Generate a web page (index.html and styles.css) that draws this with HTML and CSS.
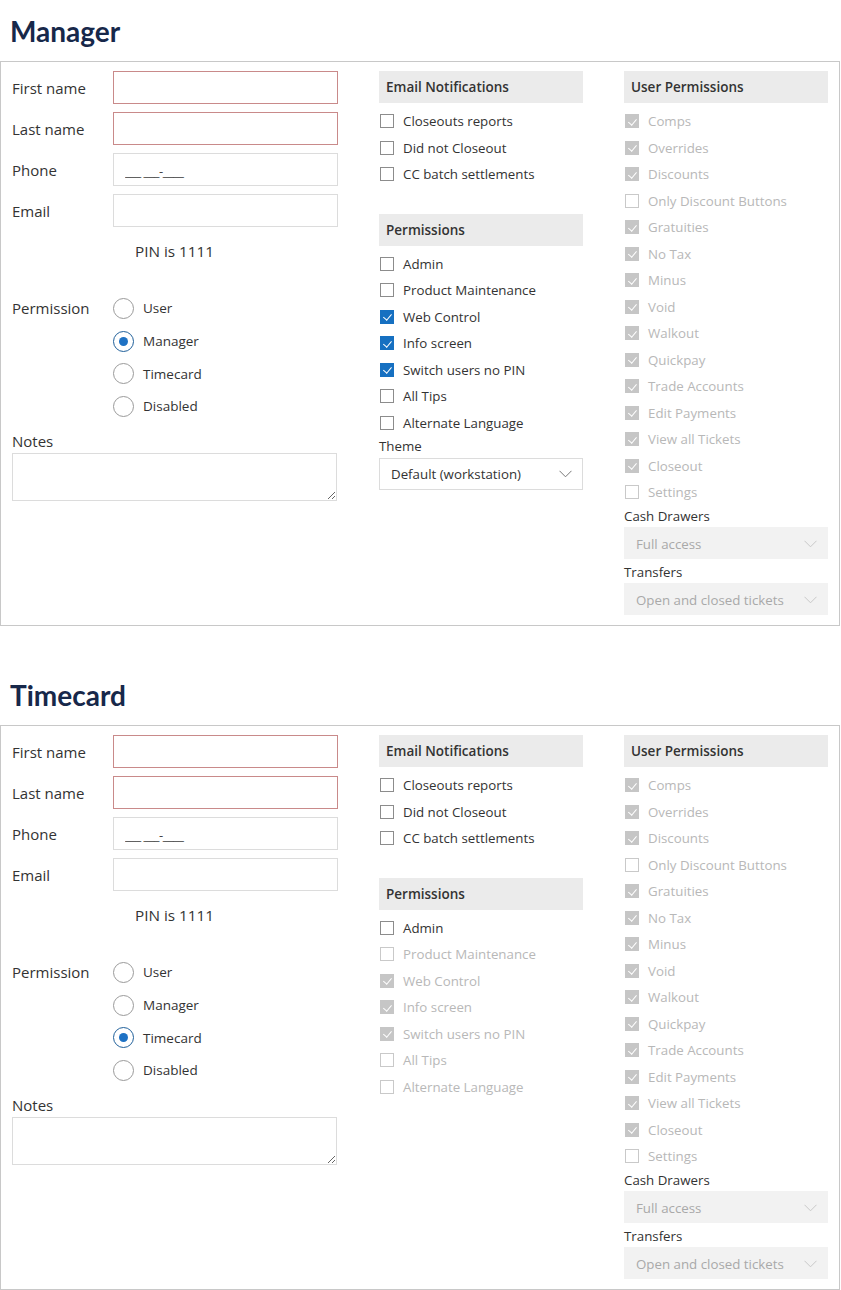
FILE: index.html
```html
<!DOCTYPE html>
<html>
<head>
<meta charset="utf-8">
<title>Users</title>
<link rel="stylesheet" href="styles.css">
</head>
<body>

<section class="sec">
  <h2 class="title">Manager</h2>
  <div class="box">
    <div class="col-left">
      <div class="frow"><label class="flabel">First name</label><input class="input invalid" type="text"></div>
      <div class="frow"><label class="flabel">Last name</label><input class="input invalid" type="text"></div>
      <div class="frow"><label class="flabel">Phone</label><input class="input" type="text" placeholder="___ ___-____"></div>
      <div class="frow"><label class="flabel">Email</label><input class="input" type="text"></div>
      <div class="pin">PIN is 1111</div>
      <div class="perm">
        <div class="flabel plabel">Permission</div>
        <div class="radios">
          <div class="radio"><span class="rc"></span>User</div>
          <div class="radio"><span class="rc on"></span>Manager</div>
          <div class="radio"><span class="rc"></span>Timecard</div>
          <div class="radio"><span class="rc"></span>Disabled</div>
        </div>
      </div>
      <div class="notes-label">Notes</div>
      <textarea class="textarea"></textarea>
    </div>

    <div class="col">
      <div class="ghead">Email Notifications</div>
      <div class="checks">
        <div class="chk"><span class="cb"></span>Closeouts reports</div>
        <div class="chk"><span class="cb"></span>Did not Closeout</div>
        <div class="chk"><span class="cb"></span>CC batch settlements</div>
      </div>
      <div class="ghead gap">Permissions</div>
      <div class="checks">
        <div class="chk"><span class="cb"></span>Admin</div>
        <div class="chk"><span class="cb"></span>Product Maintenance</div>
        <div class="chk"><span class="cb on"></span>Web Control</div>
        <div class="chk"><span class="cb on"></span>Info screen</div>
        <div class="chk"><span class="cb on"></span>Switch users no PIN</div>
        <div class="chk"><span class="cb"></span>All Tips</div>
        <div class="chk"><span class="cb"></span>Alternate Language</div>
      </div>
      <div class="slabel">Theme</div>
      <div class="select"><span>Default (workstation)</span><svg class="chev" width="13" height="8" viewBox="0 0 13 8"><path d="M0.5 0.8 L6.5 6.8 L12.5 0.8" stroke="#777" stroke-width="1" fill="none"/></svg></div>
    </div>

    <div class="col">
      <div class="ghead">User Permissions</div>
      <div class="checks dis">
        <div class="chk"><span class="cb on"></span>Comps</div>
        <div class="chk"><span class="cb on"></span>Overrides</div>
        <div class="chk"><span class="cb on"></span>Discounts</div>
        <div class="chk"><span class="cb"></span>Only Discount Buttons</div>
        <div class="chk"><span class="cb on"></span>Gratuities</div>
        <div class="chk"><span class="cb on"></span>No Tax</div>
        <div class="chk"><span class="cb on"></span>Minus</div>
        <div class="chk"><span class="cb on"></span>Void</div>
        <div class="chk"><span class="cb on"></span>Walkout</div>
        <div class="chk"><span class="cb on"></span>Quickpay</div>
        <div class="chk"><span class="cb on"></span>Trade Accounts</div>
        <div class="chk"><span class="cb on"></span>Edit Payments</div>
        <div class="chk"><span class="cb on"></span>View all Tickets</div>
        <div class="chk"><span class="cb on"></span>Closeout</div>
        <div class="chk"><span class="cb"></span>Settings</div>
      </div>
      <div class="slabel">Cash Drawers</div>
      <div class="select dis"><span>Full access</span><svg class="chev" width="13" height="8" viewBox="0 0 13 8"><path d="M0.5 0.8 L6.5 6.8 L12.5 0.8" stroke="#c8c8c8" stroke-width="1" fill="none"/></svg></div>
      <div class="slabel s2">Transfers</div>
      <div class="select dis"><span>Open and closed tickets</span><svg class="chev" width="13" height="8" viewBox="0 0 13 8"><path d="M0.5 0.8 L6.5 6.8 L12.5 0.8" stroke="#c8c8c8" stroke-width="1" fill="none"/></svg></div>
    </div>
  </div>
</section>

<section class="sec">
  <h2 class="title">Timecard</h2>
  <div class="box">
    <div class="col-left">
      <div class="frow"><label class="flabel">First name</label><input class="input invalid" type="text"></div>
      <div class="frow"><label class="flabel">Last name</label><input class="input invalid" type="text"></div>
      <div class="frow"><label class="flabel">Phone</label><input class="input" type="text" placeholder="___ ___-____"></div>
      <div class="frow"><label class="flabel">Email</label><input class="input" type="text"></div>
      <div class="pin">PIN is 1111</div>
      <div class="perm">
        <div class="flabel plabel">Permission</div>
        <div class="radios">
          <div class="radio"><span class="rc"></span>User</div>
          <div class="radio"><span class="rc"></span>Manager</div>
          <div class="radio"><span class="rc on"></span>Timecard</div>
          <div class="radio"><span class="rc"></span>Disabled</div>
        </div>
      </div>
      <div class="notes-label">Notes</div>
      <textarea class="textarea"></textarea>
    </div>

    <div class="col">
      <div class="ghead">Email Notifications</div>
      <div class="checks">
        <div class="chk"><span class="cb"></span>Closeouts reports</div>
        <div class="chk"><span class="cb"></span>Did not Closeout</div>
        <div class="chk"><span class="cb"></span>CC batch settlements</div>
      </div>
      <div class="ghead gap">Permissions</div>
      <div class="checks">
        <div class="chk"><span class="cb"></span>Admin</div>
        <div class="chk dis"><span class="cb"></span>Product Maintenance</div>
        <div class="chk dis"><span class="cb on"></span>Web Control</div>
        <div class="chk dis"><span class="cb on"></span>Info screen</div>
        <div class="chk dis"><span class="cb on"></span>Switch users no PIN</div>
        <div class="chk dis"><span class="cb"></span>All Tips</div>
        <div class="chk dis"><span class="cb"></span>Alternate Language</div>
      </div>
    </div>

    <div class="col">
      <div class="ghead">User Permissions</div>
      <div class="checks dis">
        <div class="chk"><span class="cb on"></span>Comps</div>
        <div class="chk"><span class="cb on"></span>Overrides</div>
        <div class="chk"><span class="cb on"></span>Discounts</div>
        <div class="chk"><span class="cb"></span>Only Discount Buttons</div>
        <div class="chk"><span class="cb on"></span>Gratuities</div>
        <div class="chk"><span class="cb on"></span>No Tax</div>
        <div class="chk"><span class="cb on"></span>Minus</div>
        <div class="chk"><span class="cb on"></span>Void</div>
        <div class="chk"><span class="cb on"></span>Walkout</div>
        <div class="chk"><span class="cb on"></span>Quickpay</div>
        <div class="chk"><span class="cb on"></span>Trade Accounts</div>
        <div class="chk"><span class="cb on"></span>Edit Payments</div>
        <div class="chk"><span class="cb on"></span>View all Tickets</div>
        <div class="chk"><span class="cb on"></span>Closeout</div>
        <div class="chk"><span class="cb"></span>Settings</div>
      </div>
      <div class="slabel">Cash Drawers</div>
      <div class="select dis"><span>Full access</span><svg class="chev" width="13" height="8" viewBox="0 0 13 8"><path d="M0.5 0.8 L6.5 6.8 L12.5 0.8" stroke="#c8c8c8" stroke-width="1" fill="none"/></svg></div>
      <div class="slabel s2">Transfers</div>
      <div class="select dis"><span>Open and closed tickets</span><svg class="chev" width="13" height="8" viewBox="0 0 13 8"><path d="M0.5 0.8 L6.5 6.8 L12.5 0.8" stroke="#c8c8c8" stroke-width="1" fill="none"/></svg></div>
    </div>
  </div>
</section>

</body>
</html>
```

FILE: styles.css
```css
* { box-sizing: border-box; }

body {
  margin: 0;
  font-family: "Open Sans", "Noto Sans", "Liberation Sans", sans-serif;
  color: #333;
  font-size: 13px;
  background: #fff;
}

.sec + .sec { margin-top: 38px; }

.title {
  margin: 0;
  height: 61px;
  padding: 14px 10px 0;
  font-family: Lato, "Liberation Sans", sans-serif;
  font-weight: 700;
  font-size: 28px;
  line-height: 34px;
  color: #17284a;
}

.box {
  width: 840px;
  border: 1px solid #c8c8c8;
  padding: 9px 11px 10px 11px;
  display: grid;
  grid-template-columns: 326px 204px 204px;
  column-gap: 41px;
  align-items: start;
}

/* Left column */
.frow {
  display: flex;
  align-items: center;
  height: 33px;
}
.frow + .frow { margin-top: 8px; }

.flabel {
  width: 101px;
  flex: none;
  font-size: 15px;
  padding-top: 1px;
}

.input {
  display: block;
  width: 225px;
  height: 33px;
  margin: 0;
  border: 1px solid #dcdcdc;
  border-radius: 0;
  outline: none;
  background: #fff;
  padding: 2px 0 0 11px;
  font-family: inherit;
  font-size: 13px;
  color: #333;
}
.input.invalid { border-color: #c98a8a; }
.input::placeholder {
  color: #444;
  letter-spacing: -0.5px;
  opacity: 1;
}

.pin {
  margin-top: 14px;
  padding-left: 123px;
  font-size: 15.3px;
  line-height: 20px;
}

.perm {
  display: flex;
  margin-top: 31px;
}
.plabel { line-height: 33px; padding-top: 0; }

.radios { display: flex; flex-direction: column; }

.radio {
  height: 32.7px;
  display: flex;
  align-items: center;
  gap: 9px;
  font-size: 13.5px;
}

.rc {
  width: 21px;
  height: 21px;
  border-radius: 50%;
  border: 1.5px solid #9a9a9a;
  display: flex;
  align-items: center;
  justify-content: center;
}
.rc.on { border-color: #1f5f9a; }
.rc.on::after {
  content: "";
  width: 9px;
  height: 9px;
  border-radius: 50%;
  background: #1f72c4;
}

.notes-label {
  margin-top: 8px;
  font-size: 15px;
  line-height: 20px;
}

.textarea {
  display: block;
  margin: 2px 0 0;
  width: 325px;
  height: 48px;
  border: 1px solid #dcdcdc;
  border-radius: 0;
  outline: none;
  resize: vertical;
  padding: 4px 6px;
  font-family: inherit;
  font-size: 13px;
}

/* Group columns */
.ghead {
  height: 32px;
  background: #ebebeb;
  padding-left: 7px;
  display: flex;
  align-items: center;
  font-weight: 600;
  font-size: 13.5px;
  color: #333;
}
.ghead.gap { margin-top: 26px; }

.checks { margin-top: 5px; }

.chk {
  height: 26.5px;
  display: flex;
  align-items: center;
  gap: 9px;
  padding-left: 1px;
  font-size: 13.3px;
  color: #333;
}

.cb {
  width: 14px;
  height: 14px;
  flex: none;
  border: 1px solid #8c8c8c;
  position: relative;
  background: #fff;
}
.cb.on {
  background: #1670c1;
  border-color: #1670c1;
}
.cb.on::after {
  content: "";
  position: absolute;
  left: 4px;
  top: 1.5px;
  width: 3.5px;
  height: 7px;
  border-right: 1.4px solid #fff;
  border-bottom: 1.4px solid #fff;
  transform: rotate(40deg);
}

.dis .chk, .chk.dis { color: #b8b8b8; }
.dis .cb, .chk.dis .cb { border-color: #c9c9c9; }
.dis .cb.on, .chk.dis .cb.on {
  background: #c6c6c6;
  border-color: #c6c6c6;
}

.slabel {
  margin-top: 1px;
  line-height: 19px;
  font-size: 13.3px;
}
.slabel.s2 { margin-top: 3.5px; }

.select {
  margin-top: 1.5px;
  height: 32px;
  border: 1px solid #dcdcdc;
  display: flex;
  align-items: center;
  justify-content: space-between;
  padding: 1px 10px 0 11px;
  font-size: 13.3px;
  color: #333;
}
.select.dis {
  background: #f2f2f2;
  border-color: #f2f2f2;
  color: #a9a9a9;
}
.chev { flex: none; }
```
